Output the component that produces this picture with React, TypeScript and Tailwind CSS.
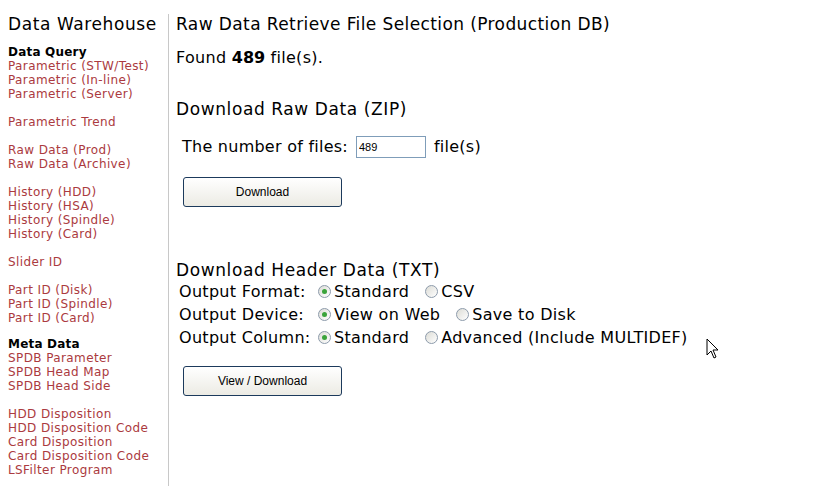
import React from "react";

const groups: { title?: string; links: string[] }[][] = [
    [
        { title: "Data Query", links: ["Parametric (STW/Test)", "Parametric (In-line)", "Parametric (Server)"] },
        { links: ["Parametric Trend"] },
        { links: ["Raw Data (Prod)", "Raw Data (Archive)"] },
        { links: ["History (HDD)", "History (HSA)", "History (Spindle)", "History (Card)"] },
        { links: ["Slider ID"] },
        { links: ["Part ID (Disk)", "Part ID (Spindle)", "Part ID (Card)"] },
    ],
    [
        { title: "Meta Data", links: ["SPDB Parameter", "SPDB Head Map", "SPDB Head Side"] },
        { links: ["HDD Disposition", "HDD Disposition Code", "Card Disposition", "Card Disposition Code", "LSFilter Program"] },
    ],
];

function Radio({ checked, label }: { checked?: boolean; label: string }) {
    return (
        <span className="flex items-center mr-[16px]">
            <span className="w-[13px] h-[13px] rounded-full border border-[#8d9bab] bg-gradient-to-br from-[#dcdcd6] to-white flex items-center justify-center mr-[3px]">
                {checked && <span className="w-[5px] h-[5px] rounded-full bg-[#3aa33a]" />}
            </span>
            <span>{label}</span>
        </span>
    );
}

function XpButton({ children }: { children: React.ReactNode }) {
    return (
        <button className="w-[159px] h-[30px] rounded-[3px] border border-[#1c3a5c] bg-gradient-to-b from-white to-[#ecebe4] text-[12px] text-black font-['Liberation_Sans',sans-serif]">
            {children}
        </button>
    );
}

export default function App() {
    return (
        <div className="flex w-[826px] h-[486px] bg-white text-black font-['DejaVu_Sans','Verdana',sans-serif] overflow-hidden">
            {/* sidebar */}
            <div className="w-[168px] shrink-0 pl-[8px] pt-[14px]">
                <div className="text-[17px] leading-[20px] tracking-[0.6px] mb-[11px]">Data Warehouse</div>
                {groups.map((sec, si) => (
                    <div key={si} className="text-[12px] leading-[14px] tracking-[0.4px] mb-[-2px]">
                        {sec.map((g, gi) => (
                            <div key={gi} className="mb-[14px]">
                                {g.title && <div className="font-bold tracking-[0.2px]">{g.title}</div>}
                                {g.links.map((l) => (
                                    <a key={l} href="#" className="block text-[#ab3a40]">{l}</a>
                                ))}
                            </div>
                        ))}
                    </div>
                ))}
            </div>
            <div className="w-px shrink-0 mt-[14px] bg-[#c8c8c8]" />

            {/* main */}
            <div className="flex-1 pl-[7px] pt-[14px] relative">
                <div className="text-[17px] leading-[20px] tracking-[0.4px]">Raw Data Retrieve File Selection (Production DB)</div>
                <div className="text-[16px] leading-[20px] tracking-[0.3px] mt-[14px]">
                    Found <span className="font-bold tracking-normal">489</span> file(s).
                </div>

                <div className="text-[17px] leading-[20px] tracking-[0.6px] mt-[31px]">Download Raw Data (ZIP)</div>
                <div className="flex items-center text-[16px] tracking-[0.25px] mt-[16px] pl-[6px]">
                    <span>The number of files:</span>
                    <input
                        defaultValue="489"
                        className="ml-[8px] mr-[8px] w-[70px] h-[22px] border border-[#7f9db9] px-[2px] text-[11px] tracking-normal font-['Liberation_Sans',sans-serif] outline-none"
                    />
                    <span>file(s)</span>
                </div>
                <div className="mt-[18px] pl-[7px]">
                    <XpButton>Download</XpButton>
                </div>

                <div className="text-[17px] leading-[20px] tracking-[0.6px] mt-[53px]">Download Header Data (TXT)</div>
                <div className="text-[16px] leading-[23px] tracking-[0.3px] pl-[3px]">
                    <div className="flex items-center">
                        <span className="w-[139px]">Output Format:</span>
                        <Radio checked label="Standard" />
                        <Radio label="CSV" />
                    </div>
                    <div className="flex items-center">
                        <span className="w-[139px]">Output Device:</span>
                        <Radio checked label="View on Web" />
                        <Radio label="Save to Disk" />
                    </div>
                    <div className="flex items-center">
                        <span className="w-[139px]">Output Column:</span>
                        <Radio checked label="Standard" />
                        <Radio label="Advanced (Include MULTIDEF)" />
                    </div>
                </div>
                <div className="mt-[17px] pl-[7px]">
                    <XpButton>View / Download</XpButton>
                </div>

                {/* mouse cursor */}
                <svg className="absolute left-[537px] top-[338px]" width="13" height="22" viewBox="0 0 13 22">
                    <path d="M1 1 L1 17 L5 13 L8 20 L10 19 L7 12 L12 12 Z" fill="white" stroke="black" strokeWidth="1" />
                </svg>
            </div>
        </div>
    );
}
